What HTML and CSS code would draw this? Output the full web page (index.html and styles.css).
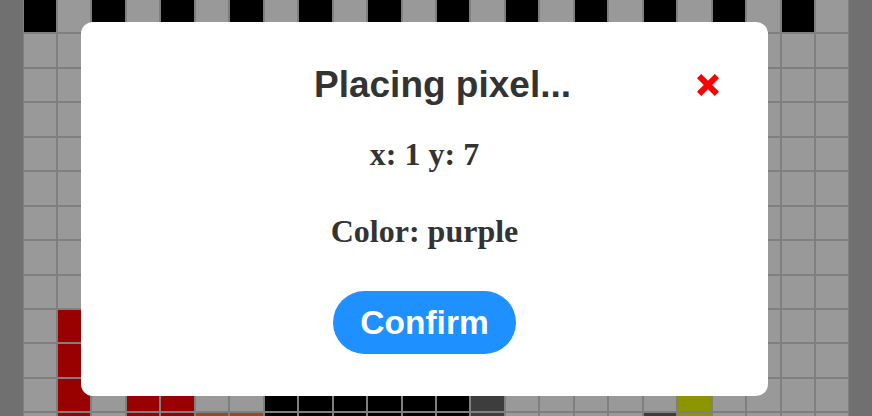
FILE: index.html
```html
<!DOCTYPE html>
<html>
<head>
<meta charset="utf-8">
<title>Pixel board</title>
<link rel="stylesheet" href="styles.css">
</head>
<body>
<div class="board">
<i class="k"></i><i></i><i class="k"></i><i></i><i class="k"></i><i></i><i class="k"></i><i></i><i class="k"></i><i></i><i class="k"></i><i></i><i class="k"></i><i></i><i class="k"></i><i></i><i class="k"></i><i></i><i class="k"></i><i></i><i class="k"></i><i></i><i class="k"></i><i></i>
<i></i><i></i><i></i><i></i><i></i><i></i><i></i><i></i><i></i><i></i><i></i><i></i><i></i><i></i><i></i><i></i><i></i><i></i><i></i><i></i><i></i><i></i><i></i><i></i>
<i></i><i></i><i></i><i></i><i></i><i></i><i></i><i></i><i></i><i></i><i></i><i></i><i></i><i></i><i></i><i></i><i></i><i></i><i></i><i></i><i></i><i></i><i></i><i></i>
<i></i><i></i><i></i><i></i><i></i><i></i><i></i><i></i><i></i><i></i><i></i><i></i><i></i><i></i><i></i><i></i><i></i><i></i><i></i><i></i><i></i><i></i><i></i><i></i>
<i></i><i></i><i></i><i></i><i></i><i></i><i></i><i></i><i></i><i></i><i></i><i></i><i></i><i></i><i></i><i></i><i></i><i></i><i></i><i></i><i></i><i></i><i></i><i></i>
<i></i><i></i><i></i><i></i><i></i><i></i><i></i><i></i><i></i><i></i><i></i><i></i><i></i><i></i><i></i><i></i><i></i><i></i><i></i><i></i><i></i><i></i><i></i><i></i>
<i></i><i></i><i></i><i></i><i></i><i></i><i></i><i></i><i></i><i></i><i></i><i></i><i></i><i></i><i></i><i></i><i></i><i></i><i></i><i></i><i></i><i></i><i></i><i></i>
<i></i><i></i><i></i><i></i><i></i><i></i><i></i><i></i><i></i><i></i><i></i><i></i><i></i><i></i><i></i><i></i><i></i><i></i><i></i><i></i><i></i><i></i><i></i><i></i>
<i></i><i></i><i></i><i></i><i></i><i></i><i></i><i></i><i></i><i></i><i></i><i></i><i></i><i></i><i></i><i></i><i></i><i></i><i></i><i></i><i></i><i></i><i></i><i></i>
<i></i><i class="r"></i><i></i><i></i><i></i><i></i><i></i><i></i><i></i><i></i><i></i><i></i><i></i><i></i><i></i><i></i><i></i><i></i><i></i><i></i><i></i><i></i><i></i><i></i>
<i></i><i class="r"></i><i></i><i></i><i></i><i></i><i></i><i></i><i></i><i></i><i></i><i></i><i></i><i></i><i></i><i></i><i></i><i></i><i></i><i></i><i></i><i></i><i></i><i></i>
<i></i><i class="r"></i><i></i><i class="r"></i><i class="r"></i><i></i><i></i><i class="k"></i><i class="k"></i><i class="k"></i><i class="k"></i><i class="k"></i><i class="k"></i><i class="d"></i><i></i><i></i><i></i><i></i><i></i><i class="y"></i><i></i><i></i><i></i><i></i>
<i></i><i class="r"></i><i></i><i class="r"></i><i class="r"></i><i class="b"></i><i class="b"></i><i class="k"></i><i class="k"></i><i class="k"></i><i class="k"></i><i class="k"></i><i class="k"></i><i class="d"></i><i></i><i></i><i></i><i></i><i class="d"></i><i class="y"></i><i></i><i></i><i></i><i></i>
</div>

<div class="modal">
  <div class="modal-head">
    <h2 class="title">Placing pixel...</h2>
    <button class="close" aria-label="Close">
      <svg width="22" height="22" viewBox="0 0 22 22"><path d="M2.1 2.1 L19.9 19.9 M19.9 2.1 L2.1 19.9" stroke="#ff0000" stroke-width="6" fill="none"/></svg>
    </button>
  </div>
  <p class="info coords">x: 1 y: 7</p>
  <p class="info color">Color: purple</p>
  <button class="confirm">Confirm</button>
</div>
</body>
</html>
```

FILE: styles.css
```css
html, body {
  margin: 0;
  padding: 0;
}
body {
  background: #707070;
  height: 416px;
  overflow: hidden;
  position: relative;
}
.board {
  width: 827px;
  margin: -1px auto 0;
  display: grid;
  grid-template-columns: repeat(24, 1fr);
  grid-auto-rows: 34.45px;
}
.board i {
  display: block;
  box-sizing: border-box;
  border: 1px solid #7f7f7f;
  background: #999999;
}
.board i.k { background: #000000; }
.board i.r { background: #990000; }
.board i.b { background: #9a4a22; }
.board i.d { background: #3d3d3d; }
.board i.y { background: #8c9400; }

.modal {
  position: absolute;
  left: 81px;
  top: 21.5px;
  width: 687px;
  height: 374.5px;
  box-sizing: border-box;
  background: #ffffff;
  border-radius: 12px;
  padding-top: 41.7px;
  display: flex;
  flex-direction: column;
  align-items: center;
  color: #333333;
}
.modal-head {
  position: relative;
  align-self: stretch;
  padding-left: 36px;
}
.title {
  margin: 0;
  text-align: center;
  font-family: "Liberation Sans", Arial, sans-serif;
  font-weight: bold;
  font-size: 37px;
  line-height: 44px;
}
.close {
  position: absolute;
  right: 49px;
  top: 11px;
  width: 22px;
  height: 22px;
  padding: 0;
  border: 0;
  background: none;
  display: block;
}
.close svg { display: block; }
.info {
  margin: 0;
  font-family: "Liberation Serif", "Times New Roman", serif;
  font-weight: bold;
  font-size: 32px;
  line-height: 40px;
}
.coords { margin-top: 27px; }
.color { margin-top: 36.7px; }
.confirm {
  margin-top: 40.1px;
  height: 63px;
  padding: 0 27px;
  border: 0;
  border-radius: 32px;
  background: #1e90ff;
  color: #ffffff;
  font-family: "Liberation Sans", Arial, sans-serif;
  font-weight: bold;
  font-size: 33.5px;
  line-height: 63px;
}
```
